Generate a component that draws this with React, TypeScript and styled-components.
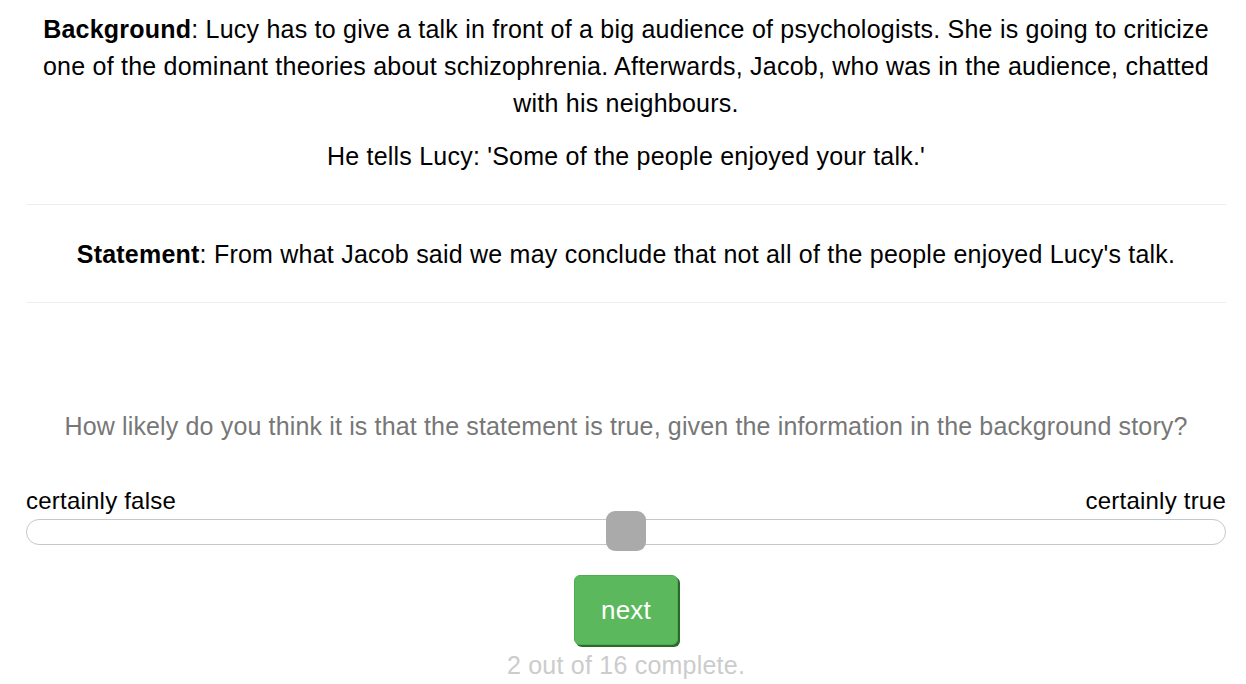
import React, { useState } from "react";
import styled, { createGlobalStyle } from "styled-components";

const GlobalStyle = createGlobalStyle`
  html, body {
    margin: 0;
    padding: 0;
    background: #ffffff;
  }
  body {
    font-family: "Liberation Sans", Arial, sans-serif;
    color: #000000;
    letter-spacing: 0.22px;
  }
`;

const Page = styled.div`
  width: 1200px;
  padding: 11px 20px 0 26px;
`;

const Section = styled.div`
  text-align: center;
  font-size: 25px;
  line-height: 37px;
  padding: 0 0 13px 0;
`;

const Para = styled.p`
  margin: 0 0 16px 0;
`;

const Divider = styled.hr`
  border: 0;
  border-top: 1px solid #eeeeee;
  margin: 0;
`;

const StatementBlock = styled.div`
  text-align: center;
  font-size: 25px;
  line-height: 37px;
  padding: 31px 0 29px 0;
`;

const Question = styled.div`
  margin-top: 105px;
  text-align: center;
  font-size: 25px;
  line-height: 37px;
  letter-spacing: 0.15px;
  color: #777777;
`;

const Labels = styled.div`
  margin-top: 42px;
  display: flex;
  justify-content: space-between;
  font-size: 24px;
  line-height: 28px;
`;

const Track = styled.div`
  position: relative;
  margin-top: 4px;
  height: 24px;
  border: 1px solid #c4c7cc;
  border-radius: 13px;
  background: #ffffff;
`;

const Thumb = styled.div`
  position: absolute;
  top: -9px;
  width: 40px;
  height: 40px;
  margin-left: -20px;
  border-radius: 9px;
  background: #aaaaaa;
`;

const Footer = styled.div`
  display: flex;
  flex-direction: column;
  align-items: center;
  margin-top: 30px;
`;

const NextButton = styled.button`
  width: 104px;
  height: 70px;
  border: 1px solid #4cae4c;
  border-radius: 6px;
  background: #5cb85c;
  box-shadow: 2px 2px 0 #2b6a2b;
  color: #ffffff;
  font-family: "Liberation Sans", Arial, sans-serif;
  font-size: 26px;
  letter-spacing: 0.2px;
  cursor: pointer;
`;

const Progress = styled.div`
  margin-top: 6px;
  font-size: 25px;
  line-height: 28px;
  color: #cccccc;
`;

export default function App() {
  const [value] = useState(50);
  return (
    <>
      <GlobalStyle />
      <Page>
        <Section>
          <Para>
            <b>Background</b>: Lucy has to give a talk in front of a big audience of psychologists. She is going to
            criticize one of the dominant theories about schizophrenia. Afterwards, Jacob, who was in the audience,
            chatted with his neighbours.
          </Para>
          <Para>He tells Lucy: 'Some of the people enjoyed your talk.'</Para>
        </Section>
        <Divider />
        <StatementBlock>
          <b>Statement</b>: From what Jacob said we may conclude that not all of the people enjoyed Lucy's talk.
        </StatementBlock>
        <Divider />
        <Question>
          How likely do you think it is that the statement is true, given the information in the background story?
        </Question>
        <Labels>
          <span>certainly false</span>
          <span>certainly true</span>
        </Labels>
        <Track>
          <Thumb style={{ left: `${value}%` }} />
        </Track>
        <Footer>
          <NextButton>next</NextButton>
          <Progress>2 out of 16 complete.</Progress>
        </Footer>
      </Page>
    </>
  );
}
